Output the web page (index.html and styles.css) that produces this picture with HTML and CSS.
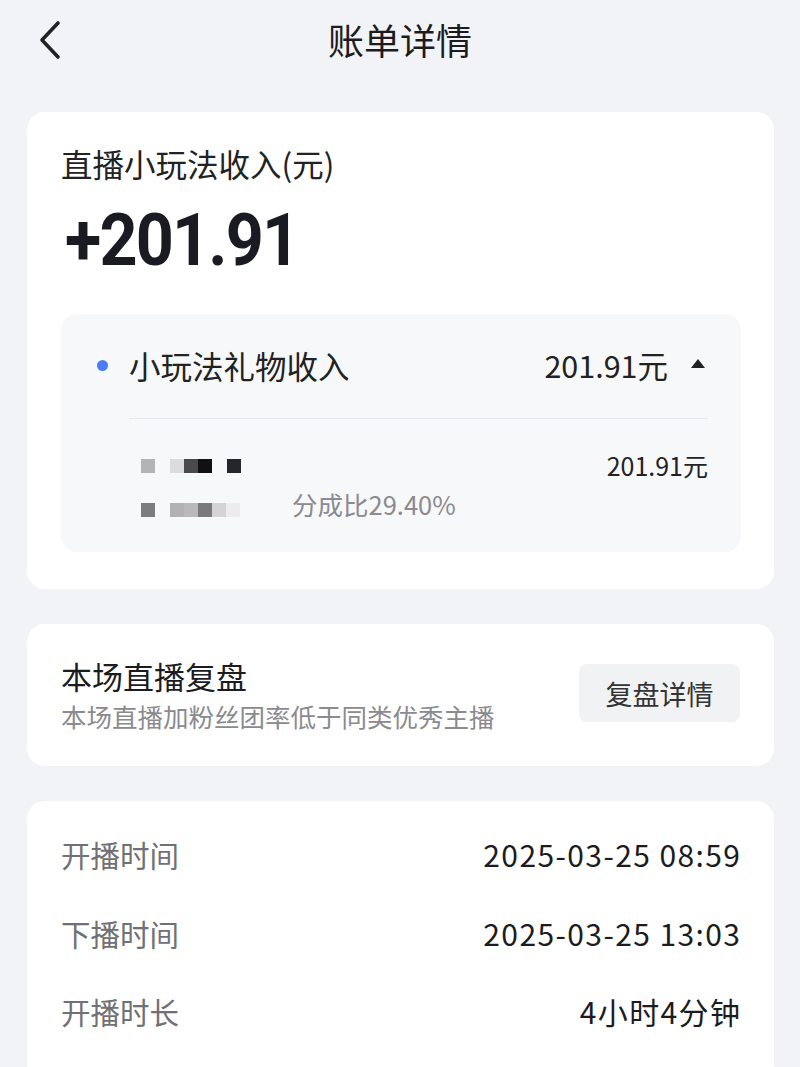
FILE: index.html
```html
<!DOCTYPE html>
<html lang="zh">
<head>
  <meta charset="UTF-8" />
  <meta name="viewport" content="width=device-width, initial-scale=1.0"/>
  <title>账单详情</title>
  <link rel="stylesheet" href="styles.css">
</head>
<body>
  <div class="topbar">
    <svg class="back" width="28" height="40" viewBox="0 0 28 40">
      <path d="M22 3 L6 20 L22 37" fill="none" stroke="#222" stroke-width="3.6" stroke-linecap="round" stroke-linejoin="round"/>
    </svg>
    <div class="title">账单详情</div>
  </div>

  <div class="card income">
    <div class="income-label">直播小玩法收入(元)</div>
    <div class="income-amount">+201.91</div>
    <div class="breakdown">
      <div class="bd-head">
        <span class="dot"></span>
        <span class="bd-name">小玩法礼物收入</span>
        <span class="bd-value">201.91元</span>
        <span class="caret"></span>
      </div>
      <div class="bd-line"></div>
      <div class="bd-item">
        <div class="mosaic">
          <div class="mrow">
            <i style="background:#b4b4b6"></i><i class="gap"></i><i style="background:#dcdcde"></i><i style="background:#4a4a4c"></i><i style="background:#111113"></i><i class="gap"></i><i style="background:#26262a"></i>
          </div>
          <div class="mrow">
            <i style="background:#7d7d80"></i><i class="gap"></i><i style="background:#b2b2b4"></i><i style="background:#b9b9bb"></i><i style="background:#7a7a7c"></i><i style="background:#d4d4d6"></i><i style="background:#ececee"></i>
          </div>
        </div>
        <div class="bd-ratio">分成比29.40%</div>
        <div class="bd-item-value">201.91元</div>
      </div>
    </div>
  </div>

  <div class="card review">
    <div class="review-text">
      <div class="review-title">本场直播复盘</div>
      <div class="review-sub">本场直播加粉丝团率低于同类优秀主播</div>
    </div>
    <div class="review-btn">复盘详情</div>
  </div>

  <div class="card times">
    <div class="trow"><span class="tlabel">开播时间</span><span class="tvalue">2025-03-25 08:59</span></div>
    <div class="trow"><span class="tlabel">下播时间</span><span class="tvalue">2025-03-25 13:03</span></div>
    <div class="trow"><span class="tlabel">开播时长</span><span class="tvalue">4小时4分钟</span></div>
  </div>
</body>
</html>
```

FILE: styles.css
```css
body {
  margin: 0;
  font-family: "Noto Sans CJK SC", "Noto Sans", sans-serif;
  background: #f2f3f7;
  color: #1c1c1f;
  overflow: hidden;
}
.topbar {
  position: relative;
  height: 80px;
  display: flex;
  align-items: center;
  justify-content: center;
  margin-bottom: 32px;
}
.back {
  position: absolute;
  left: 36px;
  top: 20px;
}
.title {
  font-size: 36px;
  color: #1c1c1f;
  margin-top: -2px;
}
.card {
  background: #fff;
  border-radius: 18px;
  margin: 0 26px 35px 27px;
}
.income {
  padding: 28px 33px 37px 34px;
}
.income-label {
  font-size: 31.5px;
  line-height: 46px;
  color: #222;
}
.income-amount {
  font-family: Roboto, "Noto Sans", sans-serif;
  font-weight: 700;
  font-size: 73px;
  letter-spacing: -2px;
  line-height: 90px;
  margin-top: 9px;
  margin-bottom: -5px;
  margin-left: 4px;
  color: #1a1a22;
  transform: scaleX(0.91);
  transform-origin: left center;
}
.breakdown {
  background: #f7f8fa;
  border-radius: 16px;
  margin-top: 34px;
  padding: 0 33px 0 36px;
  height: 238px;
}
.bd-head {
  display: flex;
  align-items: center;
  height: 104px;
  padding-bottom: 2px;
  box-sizing: border-box;
}
.dot {
  width: 11px;
  height: 11px;
  border-radius: 50%;
  background: #4a7df2;
  margin-right: 21px;
}
.bd-name {
  font-size: 31.5px;
  color: #222;
  flex: 1;
}
.bd-value {
  font-size: 30.5px;
  color: #222;
}
.caret {
  width: 0;
  height: 0;
  border-left: 7px solid transparent;
  border-right: 7px solid transparent;
  border-bottom: 9px solid #222;
  margin-left: 23px;
  margin-right: 3px;
  margin-bottom: 4px;
}
.bd-line {
  height: 1px;
  background: #e6e7ea;
  margin-left: 32px;
}
.bd-item {
  position: relative;
  height: 133px;
}
.mosaic {
  position: absolute;
  left: 44px;
  top: 40px;
  display: flex;
  flex-direction: column;
  gap: 30px;
}
.mrow {
  display: flex;
}
.mrow i {
  display: block;
  width: 14px;
  height: 14px;
}
.mrow i.gap {
  width: 15px;
}
.bd-ratio {
  position: absolute;
  left: 195px;
  top: 66px;
  font-size: 25.5px;
  color: #8a8a8f;
}
.bd-item-value {
  position: absolute;
  right: 0;
  top: 28px;
  font-size: 25px;
  color: #222;
}
.review {
  display: flex;
  align-items: center;
  justify-content: space-between;
  height: 142px;
  padding: 0 34px 0 34px;
}
.review-title {
  font-size: 31px;
  color: #1c1c1f;
  line-height: 40px;
}
.review-sub {
  font-size: 25.5px;
  color: #8a8a8f;
  line-height: 36px;
  margin-top: 2px;
}
.review-btn {
  background: #f1f2f4;
  border-radius: 8px;
  width: 161px;
  height: 58px;
  display: flex;
  align-items: center;
  justify-content: center;
  font-size: 27px;
  color: #333;
  margin-bottom: 4px;
}
.times {
  padding: 14px 34px 30px 34px;
}
.trow {
  display: flex;
  justify-content: space-between;
  align-items: center;
  height: 78.5px;
}
.tlabel {
  font-size: 29.5px;
  color: #707075;
}
.tvalue {
  font-size: 30px;
  letter-spacing: 1.4px;
  margin-right: -1.4px;
  color: #1c1c1f;
}
```
